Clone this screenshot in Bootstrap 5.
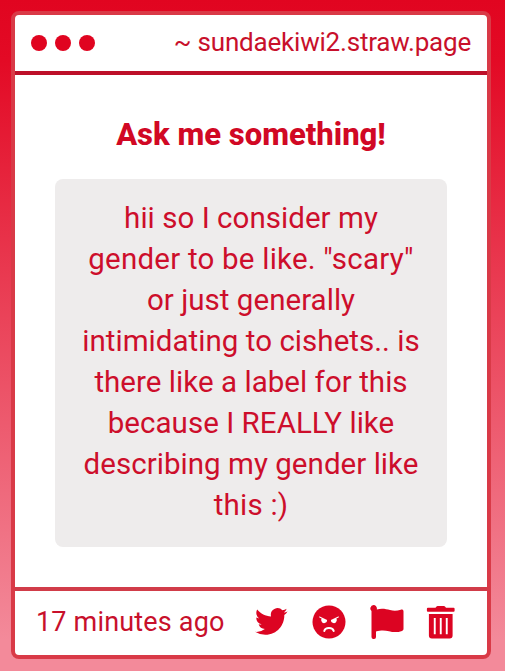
<!DOCTYPE html>
<html lang="en">
<head>
<meta charset="utf-8">
<meta name="viewport" content="width=device-width, initial-scale=1">
<title>Ask me something!</title>
<link href="https://cdn.jsdelivr.net/npm/bootstrap@5.3.0/dist/css/bootstrap.min.css" rel="stylesheet">
<style>
body{height:671px;overflow:hidden;padding:11px 14px 12px 11px;font-family:Roboto,"Liberation Sans",sans-serif;color:#d10824;background:linear-gradient(#e10520 0,#e30a25 60px,#f38a9a 640px,#f38a9a 100%)}
.window{height:648px;border:4px solid #d93a47;border-radius:8px}
.bar-top{height:60px;border-bottom:4px solid #bd1029;padding:0 16px}
.dot{width:16px;height:16px;background:#e00420}
.site{font-size:26px;line-height:52px;letter-spacing:-.2px;padding-bottom:3px;color:#c8102b}
.ask-title{font-size:31px;line-height:40px;font-weight:800;margin:40px 0 24px}
.question{width:392px;height:368px;background:#eeecec;border-radius:8px;padding-top:19px;font-size:29.5px;line-height:41px;letter-spacing:.04px;color:#cd0e2b}
.wide{letter-spacing:.22px}
.bar-bottom{height:68px;border-top:4px solid #d13c49;padding:0 31px 0 21px}
.ago{font-size:27px;line-height:60px;letter-spacing:.18px;padding-bottom:2px;color:#c8102b}
.icons{gap:24px;padding-bottom:2px}
.icons svg{display:block;fill:#dc0422}
.icons svg:last-child{margin-left:-2px}
</style>
</head>
<body>
<main class="window bg-white d-flex flex-column">
  <header class="bar-top d-flex align-items-center justify-content-between">
    <div class="d-flex gap-2"><span class="dot rounded-circle"></span><span class="dot rounded-circle"></span><span class="dot rounded-circle"></span></div>
    <div class="site text-nowrap">~ sundaekiwi2.straw.page</div>
  </header>
  <section class="flex-grow-1 d-flex flex-column align-items-center">
    <h1 class="ask-title text-nowrap">Ask me something!</h1>
    <p class="question text-center text-nowrap mb-0">hii so I consider my<br><span class="wide">gender to be like. "scary"</span><br>or just generally<br>intimidating to cishets.. is<br>there like a label for this<br>because I REALLY like<br>describing my gender like<br><span class="wide">this :)</span></p>
  </section>
  <footer class="bar-bottom d-flex align-items-center justify-content-between">
    <div class="ago text-nowrap">17 minutes ago</div>
    <div class="icons d-flex align-items-center">
      <svg width="33" height="34" viewBox="0 0 33 34" role="img" aria-label="Twitter"><path transform="translate(0 .2) scale(1.36)" d="M23.95 4.57a10 10 0 0 1-2.82.77 4.96 4.96 0 0 0 2.16-2.72c-.95.55-2 .95-3.12 1.18a4.92 4.92 0 0 0-8.38 4.48C7.69 8.1 4.07 6.13 1.64 3.16a4.92 4.92 0 0 0 1.52 6.57 4.9 4.9 0 0 1-2.23-.61v.06a4.92 4.92 0 0 0 3.95 4.83 5 5 0 0 1-2.21.08 4.94 4.94 0 0 0 4.6 3.42A9.87 9.87 0 0 1 0 19.54a14 14 0 0 0 7.55 2.21c9.05 0 14-7.5 14-13.98l-.02-.64a9.9 9.9 0 0 0 2.42-2.56z"/></svg>
      <svg width="34" height="34" viewBox="0 0 34 34" role="img" aria-label="Block"><circle cx="17" cy="17" r="16.5"/><g fill="#fff"><path d="M7.3 11.200 15.100 15a2.900 2.900 0 0 1-5.600 1.300A2.800 2.800 0 0 1 9.600 13.500L7.300 12.400z"/><path d="M26.700 11.200 18.900 15a2.900 2.900 0 0 0 5.600 1.300A2.800 2.800 0 0 0 24.400 13.500L26.700 12.400z"/></g><path d="M12.300 26c1-4 8.400-4 9.400 0" fill="none" stroke="#fff" stroke-width="2" stroke-linecap="round"/></svg>
      <svg width="34" height="34" viewBox="0 0 34 34" role="img" aria-label="Report"><path d="M3.500 0a3.500 3.500 0 0 1 3.300 4.400C12 2.900 16 4 20 5c4 1 7 .8 10.800-.3 1.500-.4 2.700.3 2.700 1.700v17.400c0 1-.5 1.700-1.500 2.100-5 1.800-9 1.300-13 .3-4-1-8-1.300-13 .3v5.500A2 2 0 0 1 4 34H3.500a2 2 0 0 1-2-2V6.100A3.500 3.500 0 0 1 3.500 0z"/></svg>
      <svg width="30" height="34" viewBox="0 0 30 34" role="img" aria-label="Delete"><path d="M1.900 2.800H9.500L10.300 1.700Q10.800 1 11.700 1h6.100q.9 0 1.400.7l.8 1.100h7.600q1 0 1 1v2q0 1-1 1H1.900q-1 0-1-1v-2q0-1 1-1z"/><path fill-rule="evenodd" d="M2.900 9H26.600V30.500Q26.600 33.500 23.600 33.500H5.900Q2.900 33.500 2.900 30.500zM7.800 13V29.300H9.700V13zM13.800 13V29.300H15.700V13zM19.800 13V29.300H21.700V13z"/></svg>
    </div>
  </footer>
</main>
<script src="https://cdn.jsdelivr.net/npm/bootstrap@5.3.0/dist/js/bootstrap.bundle.min.js"></script>
</body>
</html>
